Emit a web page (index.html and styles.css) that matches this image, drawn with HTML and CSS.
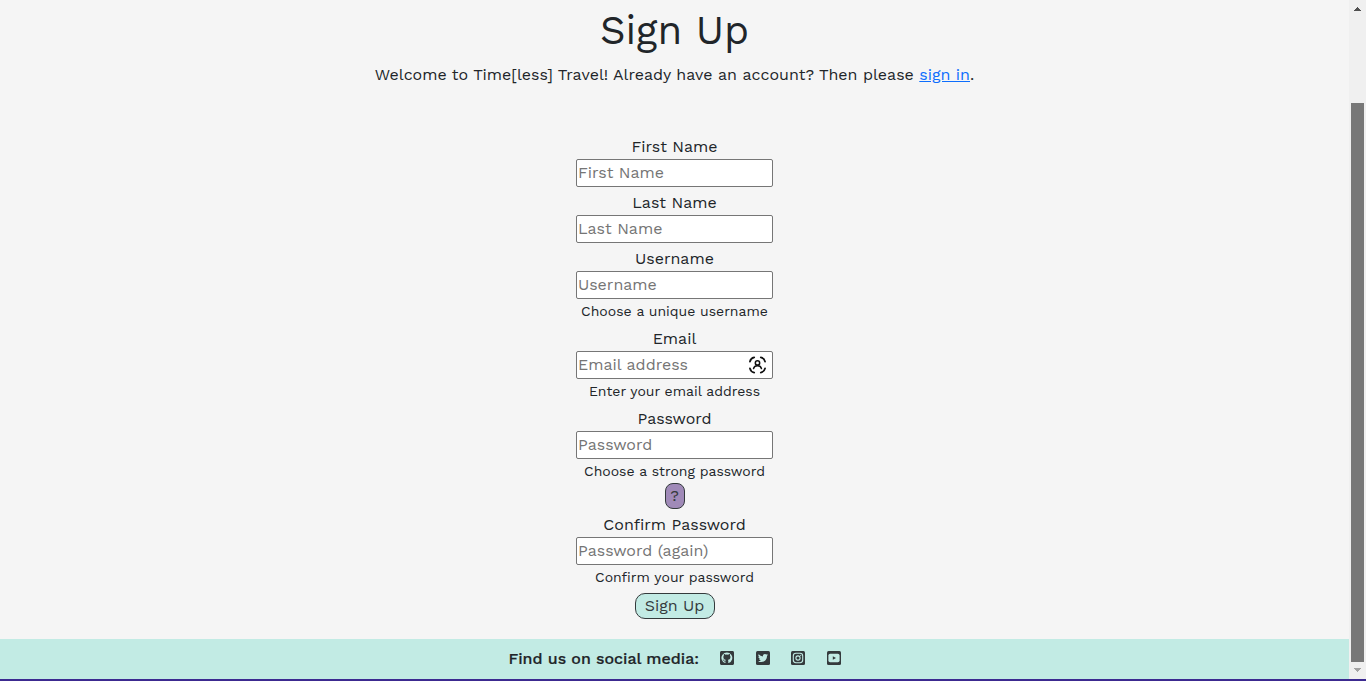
FILE: index.html
```
<!DOCTYPE html>
<html lang="en">
<head>
<meta charset="utf-8">
<title>Sign Up</title>
<link rel="stylesheet" href="styles.css">
</head>
<body>
<div class="viewport">
  <div class="page">
    <main class="content">
      <h1 class="title">Sign Up</h1>
      <p class="intro">Welcome to Time[less] Travel! Already have an account? Then please <a class="link" href="#">sign in</a>.</p>
      <form class="form">
        <div class="field"><label class="label" for="first">First Name</label><input class="input" id="first" placeholder="First Name"></div>
        <div class="field"><label class="label" for="last">Last Name</label><input class="input" id="last" placeholder="Last Name"></div>
        <div class="field"><label class="label" for="user">Username</label><input class="input" id="user" placeholder="Username"><small class="help">Choose a unique username</small></div>
        <div class="field"><label class="label" for="email">Email</label>
          <div class="input-wrap"><input class="input" id="email" placeholder="Email address">
            <svg class="autofill" viewBox="0 0 18 18" fill="none" stroke="#111" stroke-width="1.9" stroke-linecap="round"><path d="M1 5.500C1.500 3 3 1.500 5.500 1M12.500 1C15 1.500 16.500 3 17 5.500M17 12.500C16.500 15 15 16.500 12.500 17M5.500 17C3 16.500 1.500 15 1 12.500"/><circle cx="9" cy="6.800" r="2.300" stroke-width="1.600"/><path d="M4.800 12.800C5.800 8.700 12.200 8.700 13.200 12.800" stroke-width="1.600"/></svg>
          </div><small class="help">Enter your email address</small></div>
        <div class="field"><label class="label" for="pass">Password</label><input class="input" id="pass" placeholder="Password"><small class="help">Choose a strong password</small><button class="button hint" type="button">?</button></div>
        <div class="field"><label class="label" for="confirm">Confirm Password</label><input class="input" id="confirm" placeholder="Password (again)"><small class="help">Confirm your password</small></div>
        <button class="button submit" type="button">Sign Up</button>
      </form>
    </main>
    <footer class="footer">
      <span class="social-label">Find us on social media:</span>
      <div class="socials">
        <svg class="icon" viewBox="0 32 448 448"><path fill="#343a3c" d="M400 32H48C21.500 32 0 53.500 0 80v352c0 26.500 21.500 48 48 48h352c26.500 0 48-21.500 48-48V80c0-26.500-21.500-48-48-48z"/><path fill="#c2ebe4" d="M277 416c-9 2-12-4-12-9v-57c0-17-5-28-12-34 40-5 82-20 82-90 0-19-7-35-18-47 2-5 8-23-2-48-15-5-49 19-49 19a170 170 0 0 0-90 0s-34-24-49-19c-10 25-4 43-2 48-12 12-18 28-18 47 0 70 41 85 81 90-6 5-10 13-12 24-11 5-37 13-53-15 0 0-10-17-28-18 0 0-18 0-1 11 0 0 12 6 20 27 0 0 11 34 61 23v39c0 5-3 11-12 9A174 174 0 1 1 277 416z"/></svg>
        <svg class="icon" viewBox="0 32 448 448"><rect y="32" width="448" height="448" rx="48" fill="#343a3c"/><path fill="#c2ebe4" d="M351.300 191.200c.2 2.800.2 5.700.2 8.500 0 86.700-66 186.600-186.600 186.600-37.200 0-71.700-10.800-100.700-29.400 5.300.6 10.400.8 15.800.8 30.700 0 58.900-10.400 81.400-28-28.800-.6-53-19.500-61.300-45.500 10.100 1.500 19.200 1.500 29.600-1.200-30-6.100-52.500-32.500-52.500-64.400v-.8c8.700 4.900 18.900 7.900 29.600 8.300a65.500 65.500 0 0 1-20.300-87.600 186.300 186.300 0 0 0 135.200 68.600c-9.300-44.500 24-80.600 64-80.600 18.900 0 35.900 7.900 47.900 20.700 14.800-2.800 29-8.300 41.600-15.800-4.900 15.200-15.200 28-28.800 36.100 13.200-1.400 26-5.100 37.800-10.200-8.900 13.100-20.100 24.700-32.900 34z"/></svg>
        <svg class="icon" viewBox="0 0 14 14"><rect width="14" height="14" rx="1.500" fill="#343a3c"/><g fill="none" stroke="#c2ebe4"><rect x="2.300" y="2.300" width="9.400" height="9.400" rx="2.600" stroke-width="1.100"/><circle cx="7" cy="7" r="2.100" stroke-width="1.100"/></g><circle cx="9.700" cy="4.300" r=".6" fill="#c2ebe4"/></svg>
        <svg class="icon" viewBox="0 0 14 14"><rect width="14" height="14" rx="1.500" fill="#343a3c"/><rect x="1.400" y="2.700" width="11.200" height="8.600" rx="1.800" fill="#c2ebe4"/><path d="M5.800 5.200v3.600L9 7z" fill="#343a3c"/></svg>
      </div>
    </footer>
  </div>
  <div class="scrollbar">
    <svg class="arrow" viewBox="0 0 17 17"><path d="M5 11v-1h1V9h1V8h1V7h1v1h1v1h1v1h1v1z" fill="#505050"/></svg>
    <div class="thumb"></div>
    <svg class="arrow" viewBox="0 0 17 17"><path d="M5 6v1h1v1h1v1h1v1h1V9h1V8h1V7h1V6z" fill="#a3a3a3"/></svg>
  </div>
</div>
<div class="bottom-line"></div>
</body>
</html>
```
FILE: styles.css
```
* { box-sizing: border-box; }
body {
  margin: 0;
  height: 681px;
  overflow: hidden;
  background: #f5f5f5;
  color: #212529;
  font: 16px/24px "Work Sans", "Open Sans", sans-serif;
}
.viewport { display: flex; height: 679px; }
.page { flex: 1; display: flex; flex-direction: column; }
.content { flex: 1; display: flex; flex-direction: column; align-items: center; padding-top: 7px; }
.title { margin: 0 0 8px; font-size: 40px; line-height: 48px; font-weight: 400; }
.intro { margin: 0 0 48px; }
.link { color: #0d6efd; }
.form { display: flex; flex-direction: column; align-items: center; gap: 4px; }
.field { display: flex; flex-direction: column; align-items: center; }
.input {
  display: block;
  width: 197px;
  height: 28px;
  padding: 0 1px 2px;
  border: 1px solid #767676;
  border-radius: 2px;
  background: #fff;
  font: inherit;
}
.input::placeholder { color: #757575; opacity: 1; }
.input-wrap { position: relative; }
.autofill { position: absolute; right: 7px; top: 5px; width: 17px; height: 18px; }
.help { font-size: 14px; line-height: 24px; }
.button {
  height: 26px;
  padding: 0;
  border: 1px solid #343a3c;
  border-radius: 10px;
  color: #343a3c;
  font: inherit;
}
.hint { width: 20px; border-radius: 8px; background: #a08ab8; }
.submit { width: 80px; background: #c2ebe4; }
.footer { height: 40px; display: flex; justify-content: center; align-items: center; gap: 21px; background: #c2ebe4; }
.social-label { font-weight: 500; -webkit-text-stroke: 0.2px #212529; }
.socials { display: flex; gap: 21.500px; padding-bottom: 2px; }
.icon { width: 14px; height: 14px; }
.scrollbar { width: 17px; display: flex; flex-direction: column; background: #f0f0f0; }
.arrow { width: 17px; height: 17px; }
.thumb { width: 13px; height: 559px; margin: 86px 0 0 2px; background: #787878; }
.bottom-line { height: 2px; background: #3c2a90; }
```
